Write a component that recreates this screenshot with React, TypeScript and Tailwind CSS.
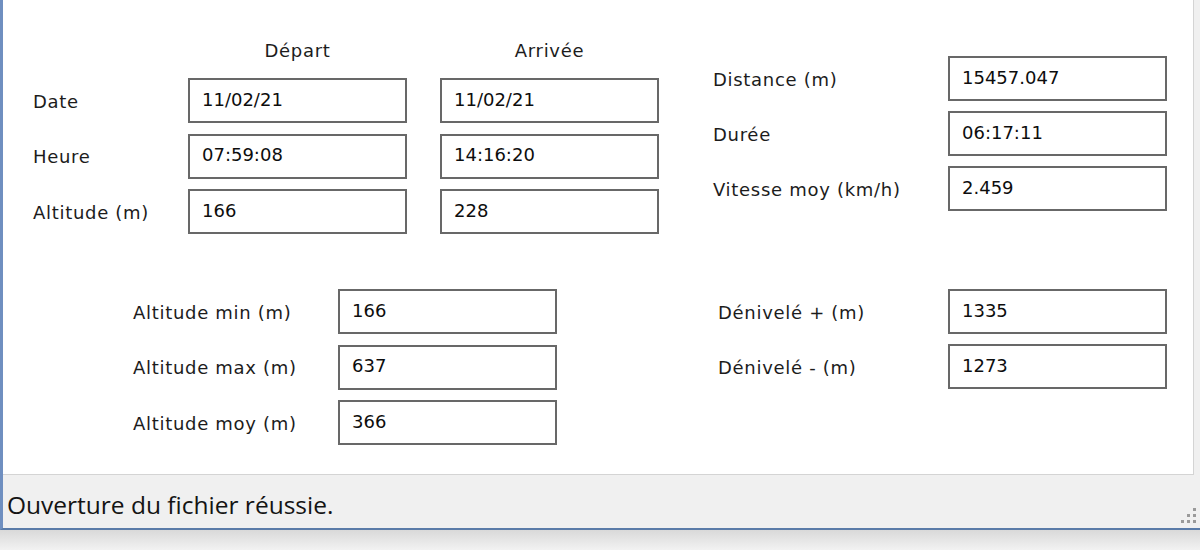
import React from "react";

function Box({ v }: { v: string }) {
  return (
    <div className="w-[219px] h-[45px] shrink-0 border-2 border-[#686868] bg-white flex items-center pl-[12px] pb-[3px] text-[18px] text-[#0d0d0d]">
      {v}
    </div>
  );
}

function Row({ label, w, values }: { label: string; w: string; values: string[] }) {
  return (
    <div className="flex items-center h-[45px]">
      <div className={`${w} shrink-0 text-[18px] tracking-[0.7px] text-[#1c1c1c] pt-[1px]`}>{label}</div>
      {values.map((v, i) => (
        <div key={i} className={i > 0 ? "ml-[33px]" : ""}>
          <Box v={v} />
        </div>
      ))}
    </div>
  );
}

function Grip() {
  const dots: [number, number][] = [
    [12, 0],
    [6, 6],
    [12, 6],
    [0, 12],
    [6, 12],
    [12, 12],
  ];
  return (
    <svg width="17" height="17" viewBox="0 0 17 17">
      {dots.map(([x, y], i) => (
        <rect key={i} x={x + 1} y={y + 1} width="3" height="3" fill="#9a9a9a" />
      ))}
    </svg>
  );
}

export default function App() {
  return (
    <div className="w-[1200px] h-[550px] overflow-hidden bg-[#eeeeee] font-['DejaVu_Sans',Verdana,sans-serif] flex flex-col">
      <div className="h-[530px] shrink-0 flex flex-col border-l-[3px] border-l-[#6f8fc0] border-b-2 border-b-[#5a7ba8] bg-[#f0f0f0]">
        {/* main panel */}
        <div className="h-[475px] shrink-0 mr-[6px] bg-white border-r border-b border-[#d4d4d4] flex flex-col">
          {/* top section */}
          <div className="flex">
            <div className="ml-[30px] mt-[36px] flex flex-col">
              <div className="flex h-[28px] items-center">
                <div className="w-[155px]" />
                <div className="w-[219px] text-center text-[18px] tracking-[0.7px] text-[#1c1c1c]">Départ</div>
                <div className="w-[219px] ml-[33px] text-center text-[18px] tracking-[0.7px] text-[#1c1c1c]">Arrivée</div>
              </div>
              <div className="mt-[14px] flex flex-col gap-y-[10.5px]">
                <Row label="Date" w="w-[155px]" values={["11/02/21", "11/02/21"]} />
                <Row label="Heure" w="w-[155px]" values={["07:59:08", "14:16:20"]} />
                <Row label="Altitude (m)" w="w-[155px]" values={["166", "228"]} />
              </div>
            </div>
            <div className="ml-[54px] mt-[56px] flex flex-col gap-y-[10px]">
              <Row label="Distance (m)" w="w-[235px]" values={["15457.047"]} />
              <Row label="Durée" w="w-[235px]" values={["06:17:11"]} />
              <Row label="Vitesse moy (km/h)" w="w-[235px]" values={["2.459"]} />
            </div>
          </div>
          {/* bottom section */}
          <div className="flex mt-[55px]">
            <div className="ml-[130px] flex flex-col gap-y-[10.5px]">
              <Row label="Altitude min (m)" w="w-[205px]" values={["166"]} />
              <Row label="Altitude max (m)" w="w-[205px]" values={["637"]} />
              <Row label="Altitude moy (m)" w="w-[205px]" values={["366"]} />
            </div>
            <div className="ml-[161px] flex flex-col gap-y-[10px]">
              <Row label="Dénivelé + (m)" w="w-[230px]" values={["1335"]} />
              <Row label="Dénivelé - (m)" w="w-[230px]" values={["1273"]} />
            </div>
          </div>
        </div>
        {/* status bar */}
        <div className="flex-1 flex items-center justify-between pl-[4px] pr-[3px]">
          <div className="font-['Open_Sans',sans-serif] text-[24.5px] text-[#141414] pt-[8px]">Ouverture du fichier réussie.</div>
          <div className="self-end mb-[4px]">
            <Grip />
          </div>
        </div>
      </div>
      <div className="flex-1 bg-gradient-to-b from-[#d9d9d9] to-[#f2f2f2]" />
    </div>
  );
}
